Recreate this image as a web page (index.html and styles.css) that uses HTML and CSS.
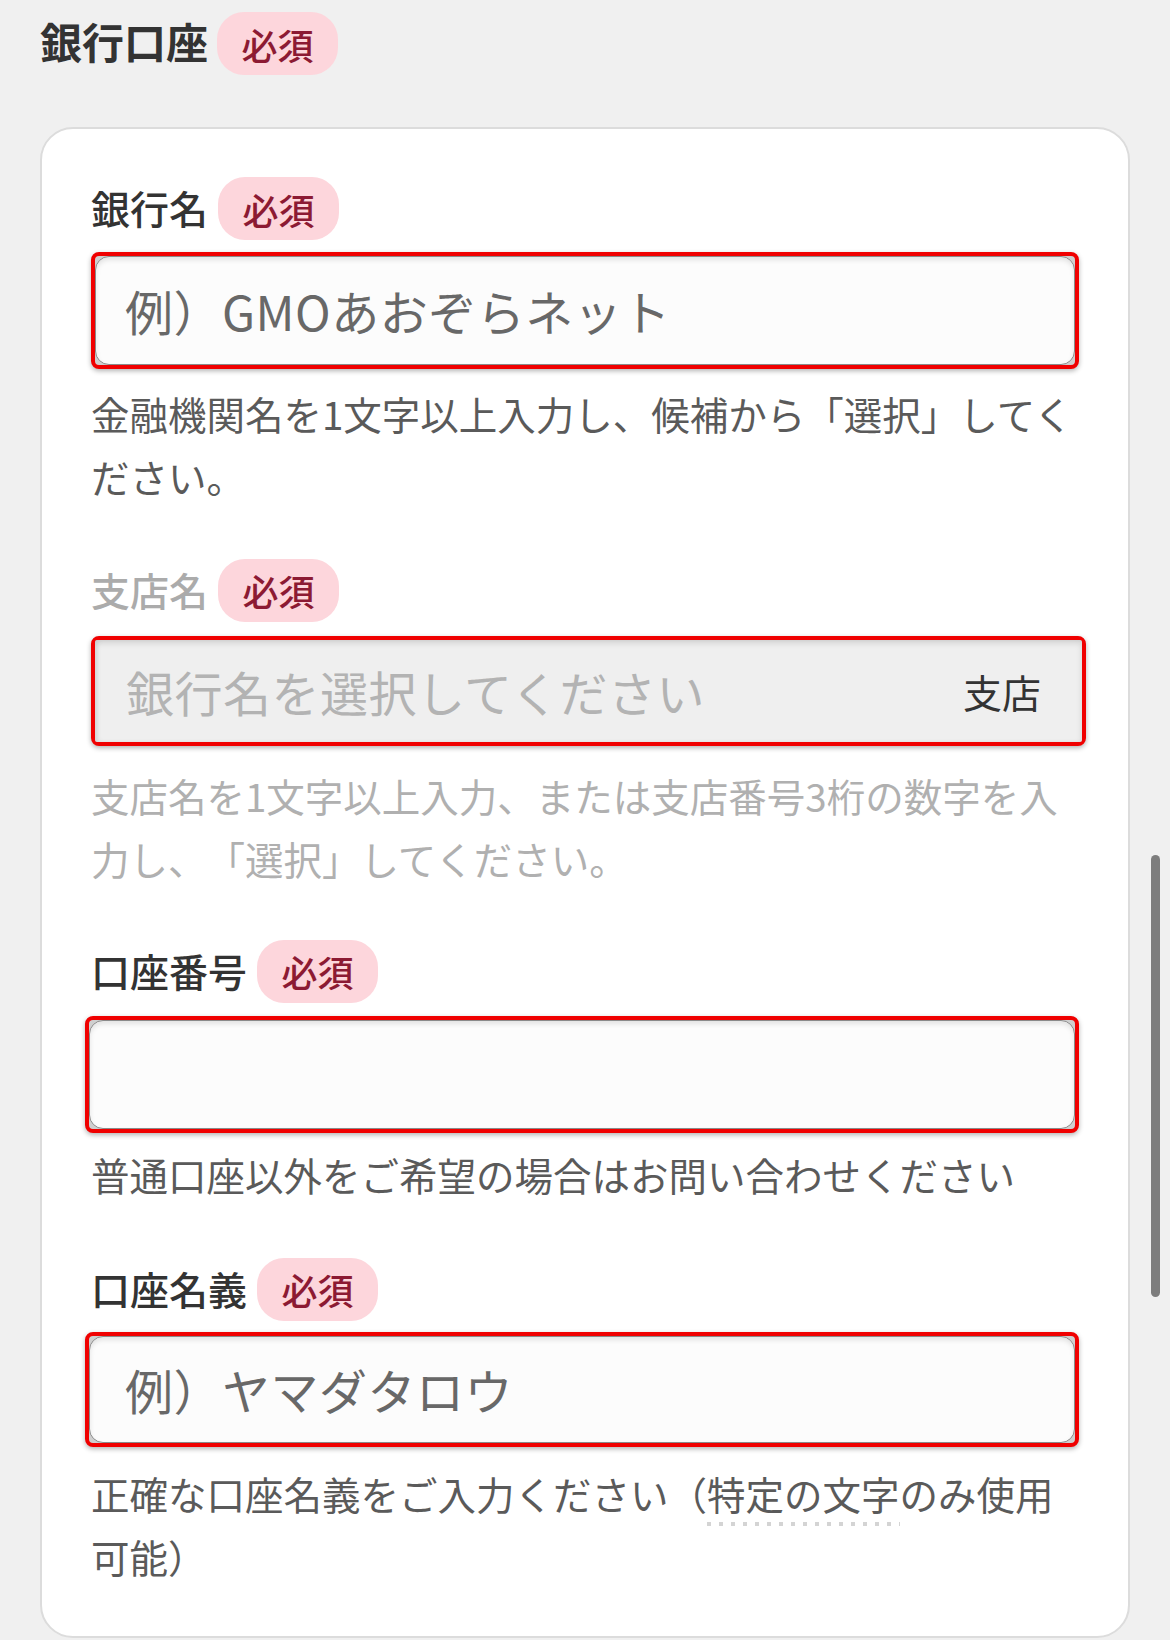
FILE: index.html
```html
<!DOCTYPE html>
<html lang="ja">
<head>
<meta charset="utf-8">
<title>銀行口座</title>
<link rel="stylesheet" href="styles.css">
</head>
<body>
<div class="page">
  <div class="section-head">
    <h2 class="title">銀行口座</h2>
    <span class="badge">必須</span>
  </div>

  <div class="card">
    <div class="field field--bank">
      <div class="label-row">
        <span class="label">銀行名</span>
        <span class="badge">必須</span>
      </div>
      <div class="mark">
        <div class="input"><span class="placeholder">例）GMOあおぞらネット</span></div>
      </div>
      <p class="help">金融機関名を1文字以上入力し、候補から「選択」してください。</p>
    </div>

    <div class="field field--branch">
      <div class="label-row">
        <span class="label label--disabled">支店名</span>
        <span class="badge">必須</span>
      </div>
      <div class="mark">
        <div class="input input--disabled">
          <span class="placeholder placeholder--disabled">銀行名を選択してください</span>
          <span class="suffix">支店</span>
        </div>
      </div>
      <p class="help help--disabled">支店名を1文字以上入力、または支店番号3桁の数字を入力し、「選択」してください。</p>
    </div>

    <div class="field field--number">
      <div class="label-row">
        <span class="label">口座番号</span>
        <span class="badge">必須</span>
      </div>
      <div class="mark">
        <div class="input"></div>
      </div>
      <p class="help">普通口座以外をご希望の場合はお問い合わせください</p>
    </div>

    <div class="field field--holder">
      <div class="label-row">
        <span class="label">口座名義</span>
        <span class="badge">必須</span>
      </div>
      <div class="mark">
        <div class="input"><span class="placeholder">例）ヤマダタロウ</span></div>
      </div>
      <p class="help">正確な口座名義をご入力ください（<span class="dotted">特定の文字</span>のみ使用可能）</p>
    </div>
  </div>
</div>
<div class="scrollbar"></div>
</body>
</html>
```

FILE: styles.css
```css
* {
  box-sizing: border-box;
}

html,
body {
  margin: 0;
  padding: 0;
}

body {
  width: 1170px;
  height: 1640px;
  overflow: hidden;
  background: #f0f0f0;
  font-family: "Noto Sans CJK JP", "Noto Sans", sans-serif;
  color: #333;
  text-spacing-trim: space-all;
}

.page {
  padding: 12px 40px 0 40px;
}

.section-head {
  display: flex;
  align-items: center;
  gap: 9px;
  height: 63px;
}

.title {
  margin: 0;
  font-size: 42px;
  font-weight: 700;
  line-height: 58px;
  padding-bottom: 5px;
  color: #333;
}

.badge {
  display: inline-flex;
  align-items: center;
  justify-content: center;
  flex: none;
  width: 121px;
  height: 63px;
  border-radius: 27px;
  background: #fdd6dc;
  color: #8c1a33;
  font-size: 36px;
  font-weight: 500;
  line-height: 1;
}

.card {
  margin-top: 52px;
  background: #fff;
  border: 2px solid #dcdcdc;
  border-radius: 33px;
  padding: 48px 48px 48px 49px;
}

.label-row {
  display: flex;
  align-items: center;
  gap: 10px;
  height: 63px;
}

.label {
  font-size: 39px;
  line-height: 60px;
  padding-bottom: 3px;
  font-weight: 500;
  color: #333;
}

.label--disabled {
  color: #ababab;
}

.mark {
  border: 4.5px solid #f00000;
  border-radius: 8px;
  background: #cfcfcf;
  box-shadow: 0 2px 5px rgba(0, 0, 0, 0.3);
}

.input {
  display: flex;
  align-items: center;
  height: 100%;
  padding: 0 30px 0 29px;
  border: 1.5px solid #8a8a8a;
  border-radius: 14px;
  background: #fcfcfc;
  box-shadow: inset 0 3px 5px rgba(0, 0, 0, 0.1);
  font-size: 48px;
  letter-spacing: 0.5px;
}

.input--disabled {
  border: none;
  border-radius: 2px;
  background: #efefef;
  box-shadow: inset 0 3px 6px rgba(0, 0, 0, 0.12), inset 3px 0 4px rgba(0, 0, 0, 0.06);
  padding: 0 41px 0 31px;
}

.placeholder {
  color: #686868;
  white-space: nowrap;
}

.placeholder--disabled {
  color: #b3b3b3;
}

.suffix {
  margin-left: auto;
  font-size: 39px;
  letter-spacing: 0;
  color: #333;
}

.help {
  margin: 13px 0 0;
  font-size: 38.5px;
  line-height: 63px;
  color: #5a5a5a;
}

.help--disabled {
  color: #b0b0b0;
}

.dotted {
  padding-bottom: 5px;
  background: linear-gradient(to right, #d4d4d4 4px, transparent 4px) 0 100% / 12px 4px repeat-x;
}

/* per-field spacing */
.field--bank .mark {
  margin: 11.5px 1px 0 0;
  height: 117px;
}

.field--bank .help {
  margin-top: 13px;
}

.field--branch {
  margin-top: 51px;
}

.field--branch .mark {
  margin: 14px -6px 0 0;
  height: 110px;
}

.field--branch .help {
  margin-top: 18px;
}

.field--number {
  margin-top: 50px;
}

.field--number .mark {
  margin: 13px 1px 0 -6px;
  height: 117px;
}

.field--number .help {
  margin-top: 10px;
}

.field--holder {
  margin-top: 52px;
}

.field--holder .mark {
  margin: 11px 1px 0 -6px;
  height: 115px;
}

.field--holder .input {
  padding-left: 35px;
}

.field--holder .help {
  margin-top: 15px;
}

.scrollbar {
  position: fixed;
  left: 1151px;
  top: 855px;
  width: 9px;
  height: 442px;
  border-radius: 5px;
  background: #7d7d7d;
}
```
